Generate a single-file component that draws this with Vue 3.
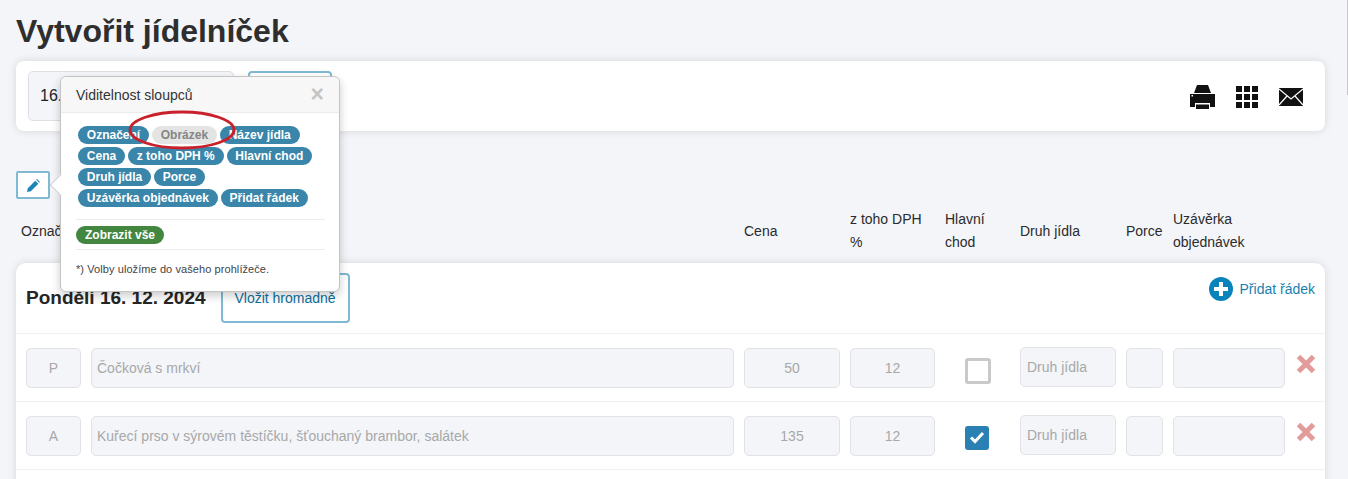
<script setup>
const visible = ["Označení", "Obrázek", "Název jídla", "Cena", "z toho DPH %", "Hlavní chod", "Druh jídla", "Porce", "Uzávěrka objednávek", "Přidat řádek"];

const rows = [
  { mark: "P", name: "Čočková s mrkví", price: "50", vat: "12", main: false },
  { mark: "A", name: "Kuřecí prso v sýrovém těstíčku, šťouchaný brambor, salátek", price: "135", vat: "12", main: true },
];
</script>

<template>
  <div class="page">
    <h1 class="title">Vytvořit jídelníček</h1>

    <div class="card toolbar">
      <div class="dateField">16. 12. 2024</div>
      <button class="outlineBtn weekBtn">Načíst</button>
      <div class="tools">
        <svg width="25" height="24" viewBox="0 0 25 24">
          <path fill="#111" d="M7 0h11l3 8H4z M0 9h25v13h-5v-4H5v4H0z M6 19.500h13V24H6z" />
          <path fill="#fff" d="M1.500 10h1.500v1.500H1.500z" />
        </svg>
        <svg width="22" height="22" viewBox="0 0 22 22" fill="#111">
          <rect v-for="c in 9" :key="c" :x="((c - 1) % 3) * 8" :y="Math.floor((c - 1) / 3) * 8" width="6" height="6" />
        </svg>
        <svg width="24" height="18" viewBox="0 0 24 18">
          <rect width="24" height="18" fill="#111" />
          <path d="M0 1l12 10L24 1M0 17l8-9M24 17l-8-9" fill="none" stroke="#fff" stroke-width="1.200" />
        </svg>
      </div>
    </div>

    <button class="outlineBtn pencilBtn">
      <svg width="13" height="13" viewBox="0 0 13 13">
        <path fill="#1b85b8" d="M0 13l.8-3.800L8.300 1.700l3 3L3.800 12.200z M9.200.8l.8-.8 3 3-.8.800z" />
      </svg>
    </button>

    <div class="grid colHead">
      <div class="firstHead">Označení</div>
      <div></div>
      <div>Cena</div>
      <div>z toho DPH %</div>
      <div>Hlavní chod</div>
      <div>Druh jídla</div>
      <div>Porce</div>
      <div>Uzávěrka objednávek</div>
    </div>

    <div class="card dayCard">
      <div class="dayHead">
        <h2 class="dayTitle">Pondělí 16. 12. 2024</h2>
        <button class="outlineBtn bulkBtn">Vložit hromadně</button>
        <a class="addRow">
          <svg width="24" height="24" viewBox="0 0 24 24">
            <circle cx="12" cy="12" r="12" fill="#0a83bb" />
            <path fill="#fff" d="M10 5h4v5h5v4h-5v5h-4v-5H5v-4h5z" />
          </svg>
          Přidat řádek
        </a>
      </div>

      <div v-for="row in rows" :key="row.mark" class="grid row">
        <div class="field center">{{ row.mark }}</div>
        <div class="field">{{ row.name }}</div>
        <div class="field center">{{ row.price }}</div>
        <div class="field center">{{ row.vat }}</div>
        <div class="checkCell">
          <span v-if="row.main" class="check on">
            <svg width="16" height="13" viewBox="0 0 16 13">
              <path d="M2 6.500l4 4 8-8.500" fill="none" stroke="#fff" stroke-width="3" />
            </svg>
          </span>
          <span v-else class="check"></span>
        </div>
        <div class="field kind">Druh jídla</div>
        <div class="field"></div>
        <div class="field"></div>
        <svg class="remove" width="20" height="20" viewBox="0 0 20 20">
          <path d="M2.500 2.500l15 15M17.500 2.500l-15 15" stroke="#e39c9c" stroke-width="5" />
        </svg>
      </div>
    </div>

    <div class="popover">
      <span class="arrow"></span>
      <div class="popHead">
        <span>Viditelnost sloupců</span>
        <span class="close">×</span>
      </div>
      <div class="popBody">
        <div class="tags">
          <span v-for="tag in visible" :key="tag" class="tag" :class="{ off: tag === 'Obrázek' }">{{ tag }}</span>
        </div>
        <hr />
        <span class="tag green">Zobrazit vše</span>
        <hr />
        <p class="note">*) Volby uložíme do vašeho prohlížeče.</p>
      </div>
    </div>

    <svg class="ellipse" width="110" height="42" viewBox="0 0 110 42">
      <ellipse cx="55" cy="21" rx="52" ry="18" fill="none" stroke="#c9202c" stroke-width="2.800" />
    </svg>

    <div class="scrollEdge"></div>
  </div>
</template>

<style>
html,
body {
  margin: 0;
  height: 479px;
  overflow: hidden;
  background: #f3f5f9;
}
</style>

<style scoped>
.page {
  position: relative;
  padding: 0 23px 0 16px;
  font-family: "Liberation Sans", Arial, sans-serif;
  font-size: 14px;
  color: #2b2b2b;
}

.title {
  margin: 0;
  padding-top: 13px;
  height: 48px;
  box-sizing: border-box;
  font-size: 32px;
  line-height: 36px;
  font-weight: 700;
  color: #2e2e2e;
}

.card {
  background: #fff;
  border-radius: 8px;
  box-shadow: 0 0 8px rgba(0, 0, 0, 0.13);
}

.toolbar {
  display: flex;
  align-items: flex-start;
  height: 70px;
  box-sizing: border-box;
  padding: 10px 12px;
  margin-top: 13px;
}

.dateField {
  width: 206px;
  height: 50px;
  box-sizing: border-box;
  padding: 0 11px;
  line-height: 48px;
  font-size: 16px;
  background: #f3f5f9;
  border: 1px solid #dcdfe3;
  border-radius: 5px;
  color: #222;
}

.outlineBtn {
  background: #fff;
  border: 2px solid #7fb9d4;
  border-radius: 4px;
  font-family: inherit;
  font-size: 14px;
  color: #0d6f9e;
  padding: 0;
}

.weekBtn {
  width: 84px;
  height: 50px;
  margin-left: 14px;
}

.tools {
  margin-left: auto;
  display: flex;
  align-items: center;
  gap: 21px;
  height: 50px;
  padding-right: 10px;
  margin-top: 1px;
}

.pencilBtn {
  display: flex;
  align-items: center;
  justify-content: center;
  width: 34px;
  height: 28px;
  margin-top: 40px;
  border-radius: 2px;
}

.grid {
  display: grid;
  grid-template-columns: 55px 643px 96px 85px 65px 96px 37px 112px 30px;
  gap: 10px;
}

.colHead {
  padding: 4px 10px 0;
  height: 56px;
  align-items: center;
  line-height: 23px;
  margin-bottom: 4px;
}

.firstHead {
  margin-left: -5px;
  white-space: nowrap;
}

.dayCard {
  padding-bottom: 60px;
  border-radius: 10px;
}

.dayHead {
  display: flex;
  align-items: flex-start;
  height: 60px;
  padding: 10px 10px 0;
  border-bottom: 1px solid #f0f1f3;
}

.dayTitle {
  margin: 0;
  padding-top: 13px;
  font-size: 19px;
  line-height: 24px;
  font-weight: 700;
  color: #262626;
}

.bulkBtn {
  width: 129px;
  height: 50px;
  margin-left: 15px;
  border-radius: 4px;
}

.addRow {
  margin-left: auto;
  display: flex;
  align-items: center;
  gap: 7px;
  margin-top: 4px;
  color: #1b7fb0;
}

.row {
  height: 67px;
  align-items: center;
  padding: 0 10px;
  border-bottom: 1px solid #f0f1f3;
}

.field {
  height: 40px;
  box-sizing: border-box;
  padding: 0 5px;
  line-height: 38px;
  background: #f3f5f9;
  border: 1px solid #e0e2e6;
  border-radius: 5px;
  color: #a8a8a8;
}

.center {
  text-align: center;
}

.kind {
  margin-top: -2px;
  padding: 0 6px;
}

.checkCell {
  padding-left: 20px;
  margin-top: 6px;
  display: flex;
}

.check {
  width: 26px;
  height: 26px;
  box-sizing: border-box;
  border: 3px solid #c9c9c9;
  border-radius: 3px;
}

.check.on {
  width: 24px;
  height: 24px;
  display: flex;
  align-items: center;
  justify-content: center;
  background: #2a80b3;
  border: 0;
  margin-bottom: 2px;
}

.remove {
  margin: -8px 0 0 1px;
}

.popover {
  position: absolute;
  left: 60px;
  top: 76px;
  width: 280px;
  box-sizing: border-box;
  height: 216px;
  background: #fff;
  border: 1px solid #c4c4c4;
  border-radius: 6px;
  box-shadow: 0 4px 10px rgba(0, 0, 0, 0.2);
  z-index: 2;
}

.arrow {
  position: absolute;
  left: -8px;
  top: 100px;
  width: 15px;
  height: 15px;
  background: #fff;
  border-left: 1px solid #d0d0d0;
  border-bottom: 1px solid #d0d0d0;
  transform: rotate(45deg);
}

.popHead {
  position: relative;
  display: flex;
  justify-content: space-between;
  align-items: center;
  height: 35px;
  padding: 0 15px;
  background: #f7f7f7;
  border-bottom: 1px solid #ebebeb;
  border-radius: 6px 6px 0 0;
  font-size: 14px;
  color: #333;
}

.close {
  font-size: 23px;
  font-weight: 700;
  color: #c4c4c4;
  line-height: 1;
}

.popBody {
  position: relative;
  padding: 13px 14px 0 15px;
}

.tags {
  display: flex;
  flex-wrap: wrap;
  gap: 3px;
  padding-left: 2px;
}

.tag {
  display: inline-block;
  height: 18px;
  padding: 0 8.800px;
  line-height: 18px;
  border-radius: 9px;
  background: #3a85aa;
  color: #fff;
  font-size: 12px;
  font-weight: 700;
  white-space: nowrap;
}

.tag.off {
  background: #e4e4e4;
  color: #858585;
}

.tag.green {
  padding: 0 9px;
  background: #43863f;
}

hr {
  margin: 12px 0 6px;
  border: 0;
  border-top: 1px solid #ececec;
}

hr:last-of-type {
  margin: 5px 0 11px;
}

.note {
  margin: 0;
  font-size: 11px;
  line-height: 16px;
  letter-spacing: 0.08px;
  color: #444;
}

.ellipse {
  position: absolute;
  left: 127px;
  top: 109px;
  z-index: 3;
}

.scrollEdge {
  position: absolute;
  right: 0;
  top: 0;
  width: 1px;
  height: 95px;
  background: #c9c9c9;
}
</style>
